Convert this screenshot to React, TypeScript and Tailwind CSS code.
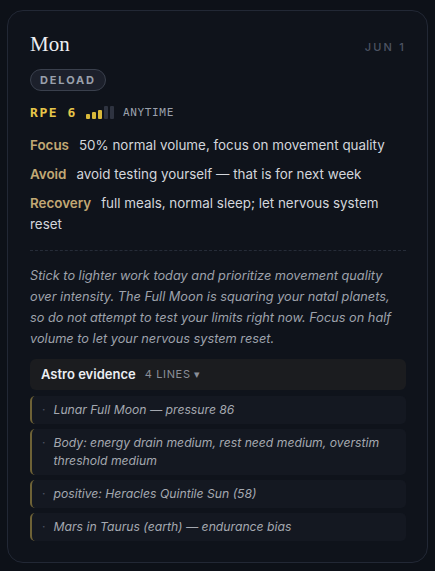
import React from "react"

const evidence = [
  "Lunar Full Moon — pressure 86",
  "Body: energy drain medium, rest need medium, overstim threshold medium",
  "positive: Heracles Quintile Sun (58)",
  "Mars in Taurus (earth) — endurance bias",
]

const guidance = [
  { label: "Focus", text: "50% normal volume, focus on movement quality" },
  { label: "Avoid", text: "avoid testing yourself — that is for next week" },
  { label: "Recovery", text: "full meals, normal sleep; let nervous system reset" },
]

function RpeBars({ level }: { level: number }) {
  const heights = [5, 7, 9, 13, 13]
  return (
    <div className="flex items-end gap-[2px] h-[13px]">
      {heights.map((h, i) => (
        <span
          key={i}
          className={i < level ? "w-[4px] rounded-[1px] bg-[#d9b93a]" : "w-[4px] rounded-[1px] bg-[#2e3340]"}
          style={{ height: h }}
        />
      ))}
    </div>
  )
}

export default function App() {
  return (
    <div className="min-h-[571px] bg-[#0d1118] px-[7px] pt-[10px] pb-[8px] font-['Inter','Liberation_Sans',sans-serif]">
      <div className="rounded-[16px] border border-[#222835] bg-[#0f131b] pl-[22px] pr-[21px] pt-[21px] pb-[21px]">
        <div className="flex items-baseline justify-between">
          <h2 className="font-['Liberation_Serif',serif] text-[21px] leading-[24px] text-[#eceef2]">Mon</h2>
          <span className="text-[11px] font-medium tracking-[0.2em] text-[#4d5463]">JUN 1</span>
        </div>

        <div className="mt-[10px]">
          <span className="inline-block rounded-full border border-[#3a404d] bg-[#1c202b] px-[9px] py-[3px] text-[11px] font-bold leading-[14px] tracking-[0.17em] text-[#9aa0ac]">
            DELOAD
          </span>
        </div>

        <div className="mt-[12px] flex items-center gap-[9px]">
          <span className="font-['DejaVu_Sans_Mono',monospace] text-[13px] font-bold tracking-[0.12em] text-[#e6c64a]">RPE 6</span>
          <RpeBars level={3} />
          <span className="font-['DejaVu_Sans_Mono',monospace] text-[11px] tracking-[0.06em] text-[#9aa0ac]">ANYTIME</span>
        </div>

        <div className="mt-[12px] flex flex-col gap-[8px]">
          {guidance.map((g) => (
            <p key={g.label} className="text-[13.4px] leading-[21px] text-[#d3d6dc]">
              <span className="mr-[10px] font-semibold text-[#c2a874]">{g.label}</span>
              {g.text}
            </p>
          ))}
        </div>

        <div className="mt-[15px] border-t border-dashed border-[#262c38]" />

        <p className="mt-[14px] text-[12.75px] italic leading-[21px] text-[#9ea2ab]">
          Stick to lighter work today and prioritize movement quality over intensity. The Full Moon is squaring your natal planets, so do not attempt to test your limits right now. Focus on half volume to let your nervous system reset.
        </p>

        <div className="mt-[10px] flex items-center gap-[9px] rounded-[6px] bg-[#1b1c1f] px-[11px] py-[6px]">
          <span className="text-[13px] font-semibold text-[#eceef2]">Astro evidence</span>
          <span className="text-[11px] tracking-[0.06em] text-[#8a8f99]">4 LINES ▾</span>
        </div>

        <ul className="mt-[6px] flex flex-col gap-[5px]">
          {evidence.map((e) => (
            <li
              key={e}
              className="flex gap-[8px] rounded-[5px] border-l-2 border-[#6e6236] bg-[#141821] py-[5px] pl-[10px] pr-[12px] text-[12.2px] italic leading-[18px] text-[#a4a8b0]"
            >
              <span className="not-italic text-[#4d5361]">·</span>
              <span>{e}</span>
            </li>
          ))}
        </ul>
      </div>
    </div>
  )
}
